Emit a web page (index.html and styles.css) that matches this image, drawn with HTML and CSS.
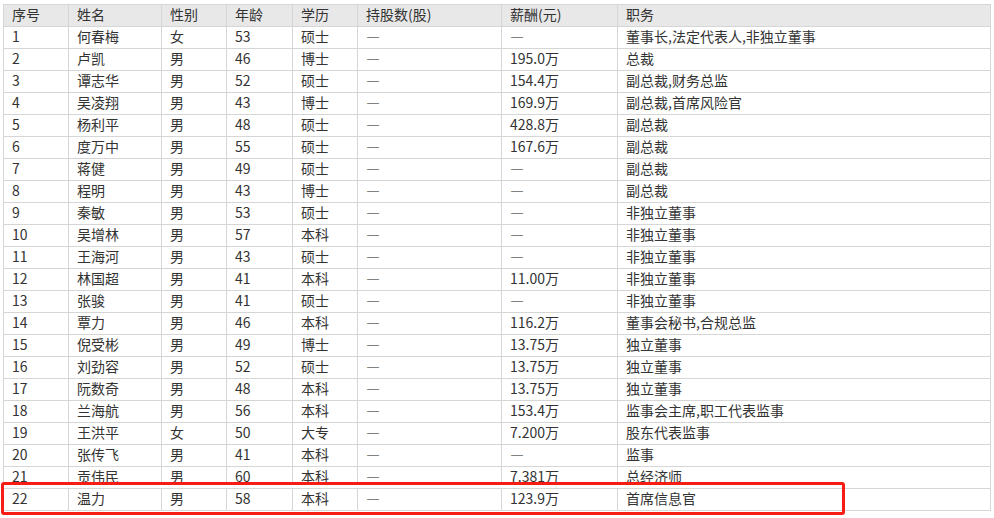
FILE: index.html
```html
<!DOCTYPE html>
<html lang="zh-CN">
<head>
<meta charset="utf-8">
<title>高管信息</title>
<link rel="stylesheet" href="styles.css">
</head>
<body>
<div class="page">
  <table class="grid">
    <colgroup>
      <col class="c1"><col class="c2"><col class="c3"><col class="c4"><col class="c5"><col class="c6"><col class="c7"><col class="c8">
    </colgroup>
    <thead>
      <tr><th>序号</th><th>姓名</th><th>性别</th><th>年龄</th><th>学历</th><th>持股数(股)</th><th>薪酬(元)</th><th>职务</th></tr>
    </thead>
    <tbody>
      <tr><td>1</td><td>何春梅</td><td>女</td><td>53</td><td>硕士</td><td class="na">—</td><td class="na">—</td><td>董事长,法定代表人,非独立董事</td></tr>
      <tr><td>2</td><td>卢凯</td><td>男</td><td>46</td><td>博士</td><td class="na">—</td><td>195.0万</td><td>总裁</td></tr>
      <tr><td>3</td><td>谭志华</td><td>男</td><td>52</td><td>硕士</td><td class="na">—</td><td>154.4万</td><td>副总裁,财务总监</td></tr>
      <tr><td>4</td><td>吴凌翔</td><td>男</td><td>43</td><td>博士</td><td class="na">—</td><td>169.9万</td><td>副总裁,首席风险官</td></tr>
      <tr><td>5</td><td>杨利平</td><td>男</td><td>48</td><td>硕士</td><td class="na">—</td><td>428.8万</td><td>副总裁</td></tr>
      <tr><td>6</td><td>度万中</td><td>男</td><td>55</td><td>硕士</td><td class="na">—</td><td>167.6万</td><td>副总裁</td></tr>
      <tr><td>7</td><td>蒋健</td><td>男</td><td>49</td><td>硕士</td><td class="na">—</td><td class="na">—</td><td>副总裁</td></tr>
      <tr><td>8</td><td>程明</td><td>男</td><td>43</td><td>博士</td><td class="na">—</td><td class="na">—</td><td>副总裁</td></tr>
      <tr><td>9</td><td>秦敏</td><td>男</td><td>53</td><td>硕士</td><td class="na">—</td><td class="na">—</td><td>非独立董事</td></tr>
      <tr><td>10</td><td>吴增林</td><td>男</td><td>57</td><td>本科</td><td class="na">—</td><td class="na">—</td><td>非独立董事</td></tr>
      <tr><td>11</td><td>王海河</td><td>男</td><td>43</td><td>硕士</td><td class="na">—</td><td class="na">—</td><td>非独立董事</td></tr>
      <tr><td>12</td><td>林国超</td><td>男</td><td>41</td><td>本科</td><td class="na">—</td><td>11.00万</td><td>非独立董事</td></tr>
      <tr><td>13</td><td>张骏</td><td>男</td><td>41</td><td>硕士</td><td class="na">—</td><td class="na">—</td><td>非独立董事</td></tr>
      <tr><td>14</td><td>覃力</td><td>男</td><td>46</td><td>本科</td><td class="na">—</td><td>116.2万</td><td>董事会秘书,合规总监</td></tr>
      <tr><td>15</td><td>倪受彬</td><td>男</td><td>49</td><td>博士</td><td class="na">—</td><td>13.75万</td><td>独立董事</td></tr>
      <tr><td>16</td><td>刘劲容</td><td>男</td><td>52</td><td>硕士</td><td class="na">—</td><td>13.75万</td><td>独立董事</td></tr>
      <tr><td>17</td><td>阮数奇</td><td>男</td><td>48</td><td>本科</td><td class="na">—</td><td>13.75万</td><td>独立董事</td></tr>
      <tr><td>18</td><td>兰海航</td><td>男</td><td>56</td><td>本科</td><td class="na">—</td><td>153.4万</td><td>监事会主席,职工代表监事</td></tr>
      <tr><td>19</td><td>王洪平</td><td>女</td><td>50</td><td>大专</td><td class="na">—</td><td>7.200万</td><td>股东代表监事</td></tr>
      <tr><td>20</td><td>张传飞</td><td>男</td><td>41</td><td>本科</td><td class="na">—</td><td class="na">—</td><td>监事</td></tr>
      <tr><td>21</td><td>贡伟民</td><td>男</td><td>60</td><td>本科</td><td class="na">—</td><td>7.381万</td><td>总经济师</td></tr>
      <tr><td>22</td><td>温力</td><td>男</td><td>58</td><td>本科</td><td class="na">—</td><td>123.9万</td><td>首席信息官</td></tr>
    </tbody>
  </table>
  <div class="highlight"><div class="cover"></div></div>
</div>
</body>
</html>
```

FILE: styles.css
```css
html, body {
  margin: 0;
  padding: 0;
  background: #ffffff;
}

.page {
  position: relative;
  padding: 4px 0 0 3px;
  width: 994px;
  height: 518px;
  box-sizing: border-box;
  overflow: hidden;
  font-family: "Noto Sans CJK SC", "Liberation Sans", sans-serif;
  font-size: 14px;
  color: #333333;
}

.grid {
  border-collapse: collapse;
  table-layout: fixed;
  width: 987px;
}

.c1 { width: 65px; }
.c2 { width: 93px; }
.c3 { width: 65px; }
.c4 { width: 66px; }
.c5 { width: 65px; }
.c6 { width: 144px; }
.c7 { width: 116px; }
.c8 { width: 373px; }

.grid th,
.grid td {
  border: 1px solid #d6d6d6;
  height: 22px;
  padding: 0 8px 2px;
  line-height: 19px;
  text-align: left;
  font-weight: normal;
  white-space: nowrap;
  box-sizing: border-box;
}

.grid th {
  background: #e8e8e8;
}

.grid td.na {
  font-feature-settings: "fwid" 1;
  color: #111111;
}

.highlight {
  position: absolute;
  left: 1px;
  top: 482px;
  width: 844px;
  height: 33px;
  box-sizing: border-box;
  border: 3px solid #f81d14;
  border-radius: 3px;
}

.highlight .cover {
  height: 3px;
  background: #ffffff;
}
```
